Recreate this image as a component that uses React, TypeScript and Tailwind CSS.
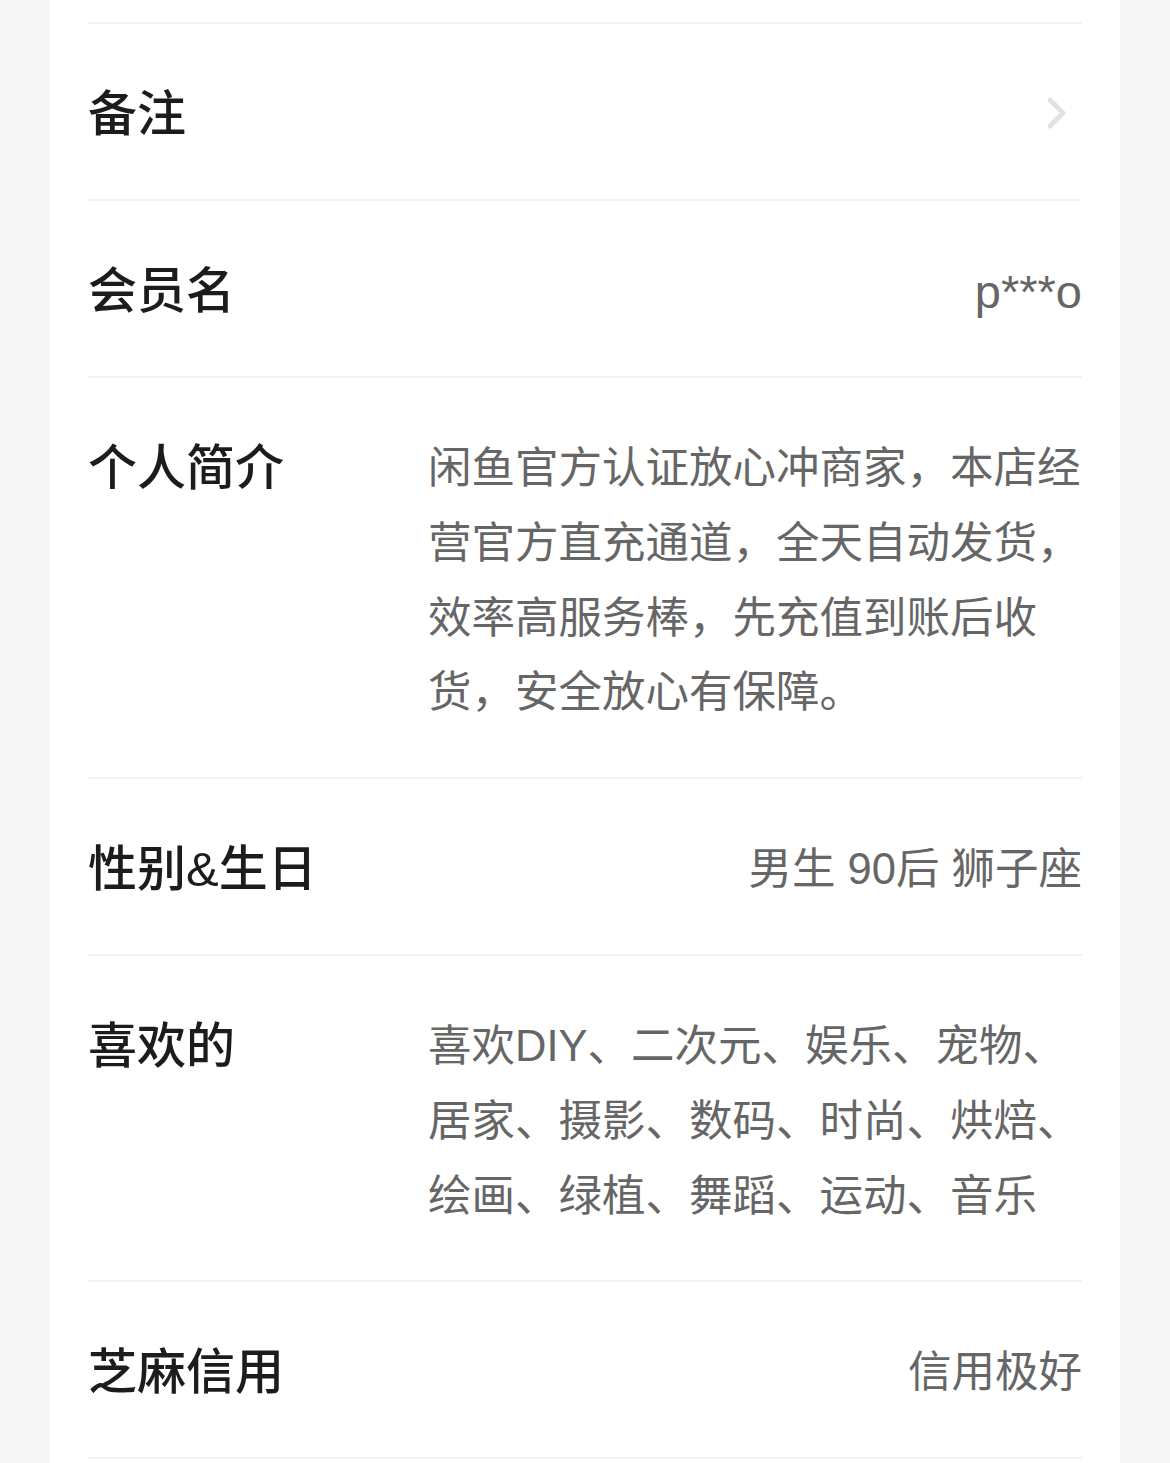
import React from 'react';

const font = { fontFamily: '"Liberation Sans", "Noto Sans CJK SC", sans-serif' };

const Chevron = () => (
  <svg width="24" height="36" viewBox="0 0 24 36" className="block">
    <path d="M5 5 L18 18 L5 31" fill="none" stroke="#e2e2e2" strokeWidth="5" strokeLinecap="round" strokeLinejoin="round" />
  </svg>
);

const Row = ({ label, children, multi }: { label: string; children?: React.ReactNode; multi?: boolean }) => (
  <div className="flex items-start border-b-[2px] border-[#f3f3f3] pt-[53px] pb-[47px]">
    <div className="w-[340px] shrink-0 text-[49px] leading-[75px] font-medium text-[#1c1c1c]">{label}</div>
    <div
      className={`flex-1 text-[43.5px] text-[#666666] ${multi ? 'text-left leading-[74.75px]' : 'text-right leading-[75px]'}`}
    >
      {children}
    </div>
  </div>
);

export default function App() {
  return (
    <div className="min-h-[1463px] bg-[#f6f6f6]" style={font}>
      <div className="mx-[50px] bg-white px-[38px] min-h-[1463px]">
        <div className="h-[24px] border-b-[2px] border-[#f3f3f3]" />
        <Row label="备注">
          <div className="flex h-[75px] items-center justify-end pr-[13px] pb-[4px]">
            <Chevron />
          </div>
        </Row>
        <Row label="会员名">
          <div className="h-[75px] text-[47px] leading-[75px]">p***o</div>
        </Row>
        <Row label="个人简介" multi>
          闲鱼官方认证放心冲商家，本店经营官方直充通道，全天自动发货，效率高服务棒，先充值到账后收货，安全放心有保障。
        </Row>
        <Row label="性别&生日">男生 90后 狮子座</Row>
        <Row label="喜欢的" multi>
          喜欢DIY、二次元、娱乐、宠物、居家、摄影、数码、时尚、烘焙、绘画、绿植、舞蹈、运动、音乐
        </Row>
        <Row label="芝麻信用">信用极好</Row>
      </div>
    </div>
  );
}
